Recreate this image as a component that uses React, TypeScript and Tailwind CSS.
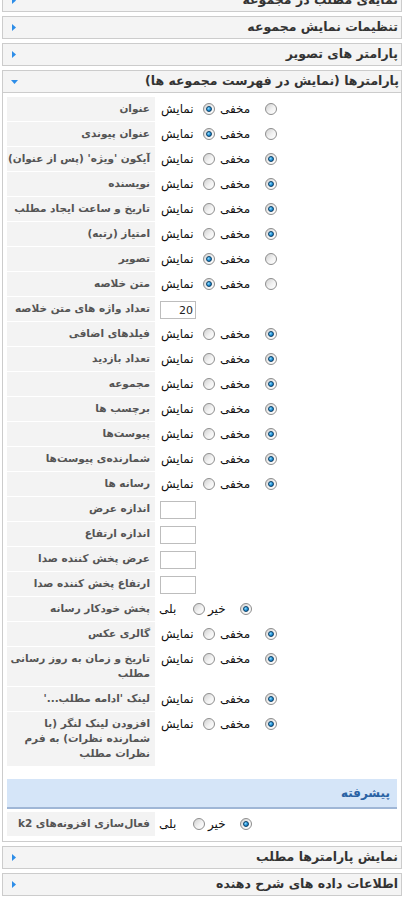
import React from "react";

type Row =
  | { kind: "sh"; label: React.ReactNode; show: boolean }
  | { kind: "yn"; label: React.ReactNode; yes: boolean }
  | { kind: "input"; label: React.ReactNode; value: string };

const rows: Row[] = [
  { kind: "sh", label: "عنوان", show: true },
  { kind: "sh", label: "عنوان پیوندی", show: true },
  { kind: "sh", label: "آیکون 'ویژه' (پس از عنوان)", show: false },
  { kind: "sh", label: "نویسنده", show: false },
  { kind: "sh", label: "تاریخ و ساعت ایجاد مطلب", show: false },
  { kind: "sh", label: "امتیاز (رتبه)", show: false },
  { kind: "sh", label: "تصویر", show: true },
  { kind: "sh", label: "متن خلاصه", show: true },
  { kind: "input", label: "تعداد واژه های متن خلاصه", value: "20" },
  { kind: "sh", label: "فیلدهای اضافی", show: false },
  { kind: "sh", label: "تعداد بازدید", show: false },
  { kind: "sh", label: "مجموعه", show: false },
  { kind: "sh", label: "برچسب ها", show: false },
  { kind: "sh", label: "پیوست‌ها", show: false },
  { kind: "sh", label: "شمارنده‌ی پیوست‌ها", show: false },
  { kind: "sh", label: "رسانه ها", show: false },
  { kind: "input", label: "اندازه عرض", value: "" },
  { kind: "input", label: "اندازه ارتفاع", value: "" },
  { kind: "input", label: "عرض پخش کننده صدا", value: "" },
  { kind: "input", label: "ارتفاع پخش کننده صدا", value: "" },
  { kind: "yn", label: "پخش خودکار رسانه", yes: false },
  { kind: "sh", label: "گالری عکس", show: false },
  {
    kind: "sh",
    label: (
      <>
        تاریخ و زمان به روز رسانی
        <br />
        مطلب
      </>
    ),
    show: false,
  },
  { kind: "sh", label: "لینک 'ادامه مطلب...'", show: false },
  {
    kind: "sh",
    label: (
      <>
        افزودن لینک لنگر (با
        <br />
        شمارنده نظرات) به فرم
        <br />
        نظرات مطلب
      </>
    ),
    show: false,
  },
];

function Radio({ checked }: { checked: boolean }) {
  return (
    <span className="w-[12px] h-[12px] shrink-0 rounded-full border border-[#8d8d8d] bg-[linear-gradient(135deg,#cfcfcf,#f2f2f2_55%,#ffffff)] flex items-center justify-center">
      {checked && (
        <span className="w-[6px] h-[6px] rounded-full border border-[#0b3f66] bg-[radial-gradient(circle_at_35%_35%,#8fdcff,#1f8fd6_55%,#0a5a96)]" />
      )}
    </span>
  );
}

function Arrow({ open }: { open?: boolean }) {
  return open ? (
    <svg width="7" height="4" viewBox="0 0 7 4" className="shrink-0">
      <polygon points="0,0 7,0 3.5,4" fill="#2d8de8" />
    </svg>
  ) : (
    <svg width="4" height="7" viewBox="0 0 4 7" className="shrink-0">
      <polygon points="0,0 4,3.5 0,7" fill="#2d8de8" />
    </svg>
  );
}

function ClosedPanel({ title }: { title: string }) {
  return (
    <div className="h-[23px] shrink-0 border border-[#cccccc] bg-[#f4f4f4] flex items-center justify-between pl-[9px] pr-[3px]">
      <Arrow />
      <span
        dir="rtl"
        className="text-[12.5px] font-bold text-[#333333] leading-none whitespace-nowrap"
      >
        {title}
      </span>
    </div>
  );
}

function Controls({ row }: { row: Row }) {
  if (row.kind === "input") {
    return (
      <div className="pl-[4px] pt-[4px]">
        <div className="w-[36px] h-[18px] border border-[#bdbdbd] bg-white text-[11px] text-[#222] flex items-center justify-end pr-[2px] leading-none">
          {row.value}
        </div>
      </div>
    );
  }
  if (row.kind === "yn") {
    return (
      <div className="flex items-center h-[24px] pl-[3px] text-[12px] text-[#111]">
        <span dir="rtl" className="w-[34px] text-left">
          بلی
        </span>
        <Radio checked={row.yes} />
        <span dir="rtl" className="w-[35px] pl-[3px] text-left">
          خیر
        </span>
        <Radio checked={!row.yes} />
      </div>
    );
  }
  return (
    <div className="flex items-center h-[24px] pl-[5px] text-[12px] text-[#111]">
      <span dir="rtl" className="w-[42px] text-left">
        نمایش
      </span>
      <Radio checked={row.show} />
      <span dir="rtl" className="w-[50px] pl-[5px] text-left">
        مخفی
      </span>
      <Radio checked={!row.show} />
    </div>
  );
}

function ParamRow({ row }: { row: Row }) {
  return (
    <div className="flex items-stretch">
      <div
        dir="rtl"
        className="w-[148px] shrink-0 bg-[#f3f3f3] text-right pr-[5px] pt-[4px] pb-[5px] text-[10.5px] leading-[15px] font-bold text-[#555555] whitespace-nowrap"
      >
        {row.label}
      </div>
      <div className="flex-1 ml-[1px]">
        <Controls row={row} />
      </div>
    </div>
  );
}

export default function App() {
  return (
    <div
      className="w-[406px] h-[899px] overflow-hidden bg-white"
      style={{ fontFamily: "'DejaVu Sans', Tahoma, sans-serif" }}
    >
      <div className="ml-[2px] w-[400px] mt-[-11px] flex flex-col gap-[4px]">
        <ClosedPanel title="نمایه‌ی مطلب در مجموعه" />
        <ClosedPanel title="تنظیمات نمایش مجموعه" />
        <ClosedPanel title="پارامتر های تصویر" />

        <div className="border border-[#cccccc] bg-white shrink-0">
          <div className="h-[22px] bg-[#f4f4f4] border-b border-[#cccccc] flex items-center justify-between pl-[8px] pr-[2px]">
            <Arrow open />
            <span
              dir="rtl"
              className="text-[12.5px] font-bold text-[#333333] leading-none whitespace-nowrap"
            >
              پارامترها (نمایش در فهرست مجموعه ها)
            </span>
          </div>
          <div className="px-[4px] pt-[4px] pb-[5px]">
            <div className="flex flex-col gap-[1px]">
              {rows.map((r, i) => (
                <ParamRow key={i} row={r} />
              ))}
            </div>
            <div className="mt-[13px] h-[30px] bg-[#d5e5f8] border-b-2 border-[#9fb6d6] flex items-center justify-end pr-[7px]">
              <span
                dir="rtl"
                className="text-[12px] font-bold text-[#2a62a4] leading-none"
              >
                پیشرفته
              </span>
            </div>
            <div className="mt-[3px]">
              <ParamRow
                row={{ kind: "yn", label: "فعال‌سازی افزونه‌های k2", yes: false }}
              />
            </div>
          </div>
        </div>

        <ClosedPanel title="نمایش پارامترها مطلب" />
        <ClosedPanel title="اطلاعات داده های شرح دهنده" />
      </div>
    </div>
  );
}
